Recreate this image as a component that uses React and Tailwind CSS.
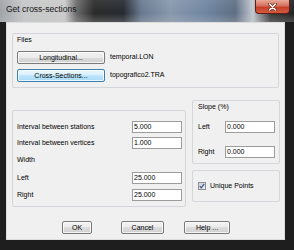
import React from 'react';
import clsx from 'clsx';

// Win7 style push button
const Btn = ({ children, className, focused }) => (
  <div
    className={clsx(
      'flex h-[13px] items-center justify-center rounded-[2px] border text-[7px] leading-none text-black shadow-[inset_0_0_0_1px_rgba(255,255,255,0.75)]',
      focused
        ? 'border-[#3c7fb1] bg-[linear-gradient(#eaf6fd_0%,#d9f0fc_50%,#bee6fd_50%,#a7d9f5_100%)]'
        : 'border-[#7a7a7a] bg-[linear-gradient(#f2f2f2_0%,#ebebeb_50%,#dddddd_50%,#cfcfcf_100%)]',
      className
    )}
  >
    {children}
  </div>
);

const Field = ({ value }) => (
  <div className="h-[12px] w-[50px] border border-[#9c9c9c] bg-white pl-[1px] text-[7px] leading-[10px] text-black">
    {value}
  </div>
);

const Group = ({ className, children }) => (
  <div className={clsx('rounded-[2px] border border-[#d3d6da] text-black', className)}>{children}</div>
);

export default function App() {
  return (
    <div className="flex h-[250px] w-[294px] flex-col overflow-hidden bg-[#1e1e1e] font-['Liberation_Sans',Arial,sans-serif] text-black">
      {/* Title bar */}
      <div className="flex h-[22px] shrink-0 items-start bg-[linear-gradient(180deg,rgba(255,255,255,0.08)_0%,rgba(255,255,255,0)_60%,rgba(200,200,200,0.25)_100%),linear-gradient(90deg,#9fa3a8_0%,#c6c7c8_8%,#cbcbcb_22%,#6a6a6a_26%,#2a2a2a_32%,#262a30_42%,#68798f_48%,#8797ac_58%,#6f85a1_70%,#5d6d82_80%,#c2c9d1_86%,#3a3a3a_92%,#232323_100%)]">
        <span className="pl-[6px] pt-[5px] text-[8.5px] leading-none text-[#151515]">Get cross-sections</span>
        <div className="ml-auto mr-[4px] flex h-[14px] w-[35px] items-center justify-center rounded-b-[4px] border border-t-0 border-[#5b1d14] bg-[linear-gradient(#e9a99b_0%,#d6705c_45%,#c4402b_55%,#d45a3e_100%)]">
          <svg width="9" height="8" viewBox="0 0 9 8">
            <path d="M1.5 1 L7.5 7 M7.5 1 L1.5 7" stroke="#6b2318" strokeWidth="3" strokeLinecap="round" />
            <path d="M1.5 1 L7.5 7 M7.5 1 L1.5 7" stroke="#ffffff" strokeWidth="1.6" strokeLinecap="round" />
          </svg>
        </div>
      </div>

      {/* Frame + client */}
      <div className="flex flex-1 pb-[10px] pl-[6px] pr-[9px]">
        <div className="flex flex-1 flex-col border border-[#dcdcdc] bg-[#f0f0f0] pl-[5px] pt-[10px]">
          {/* Files */}
          <Group className="h-[55px] w-[267px] pl-[4px] pt-[2px]">
            <div className="h-[8px] text-[7px] leading-[8px]">Files</div>
            <div className="mt-[7px] flex items-center">
              <Btn className="w-[88px]">Longitudinal...</Btn>
              <span className="ml-[5px] text-[7px]">temporal.LON</span>
            </div>
            <div className="mt-[5px] flex items-center">
              <Btn className="w-[88px]" focused>
                Cross-Sections...
              </Btn>
              <span className="ml-[5px] text-[7px]">topografico2.TRA</span>
            </div>
          </Group>

          <div className="mt-[12px] flex items-start">
            {/* Intervals and width */}
            <Group className="mt-[10px] h-[97px] w-[174px] pl-[4px] pr-[3px] pt-[10px] text-[7px]">
              <div className="flex h-[12px] items-center justify-between">
                <span>Interval between stations</span>
                <Field value="5.000" />
              </div>
              <div className="mt-[4px] flex h-[12px] items-center justify-between">
                <span>Interval between vertices</span>
                <Field value="1.000" />
              </div>
              <div className="mt-[5px] flex h-[12px] items-center">Width</div>
              <div className="mt-[6px] flex h-[12px] items-center justify-between">
                <span>Left</span>
                <Field value="25.000" />
              </div>
              <div className="mt-[5px] flex h-[12px] items-center justify-between">
                <span>Right</span>
                <Field value="25.000" />
              </div>
            </Group>

            <div className="ml-[6px] flex w-[88px] flex-col">
              {/* Slope */}
              <Group className="h-[64px] pl-[5px] pt-[2px] text-[7px]">
                <div className="h-[8px] leading-[8px]">Slope (%)</div>
                <div className="mt-[10px] flex h-[12px] items-center">
                  <span className="w-[27px]">Left</span>
                  <Field value="0.000" />
                </div>
                <div className="mt-[13px] flex h-[12px] items-center">
                  <span className="w-[27px]">Right</span>
                  <Field value="0.000" />
                </div>
              </Group>

              {/* Unique points */}
              <Group className="mt-[6px] h-[32px] pl-[5px] pt-[10px] text-[7px]">
                <div className="flex items-center">
                  <div className="flex h-[8px] w-[8px] items-center justify-center border border-[#8e8f8f] bg-[linear-gradient(135deg,#c9cfdc,#eef0f5)]">
                    <svg width="6" height="6" viewBox="0 0 6 6">
                      <path d="M0.8 3.2 L2.3 4.8 L5.2 0.8" fill="none" stroke="#3d4f85" strokeWidth="1.2" />
                    </svg>
                  </div>
                  <span className="ml-[4px]">Unique Points</span>
                </div>
              </Group>
            </div>
          </div>

          {/* Dialog buttons */}
          <div className="ml-[50px] mt-[14px] flex">
            <Btn className="w-[30px]">OK</Btn>
            <Btn className="ml-[29px] w-[43px]">Cancel</Btn>
            <Btn className="ml-[20px] w-[46px]">Help ...</Btn>
          </div>
        </div>
      </div>
    </div>
  );
}
